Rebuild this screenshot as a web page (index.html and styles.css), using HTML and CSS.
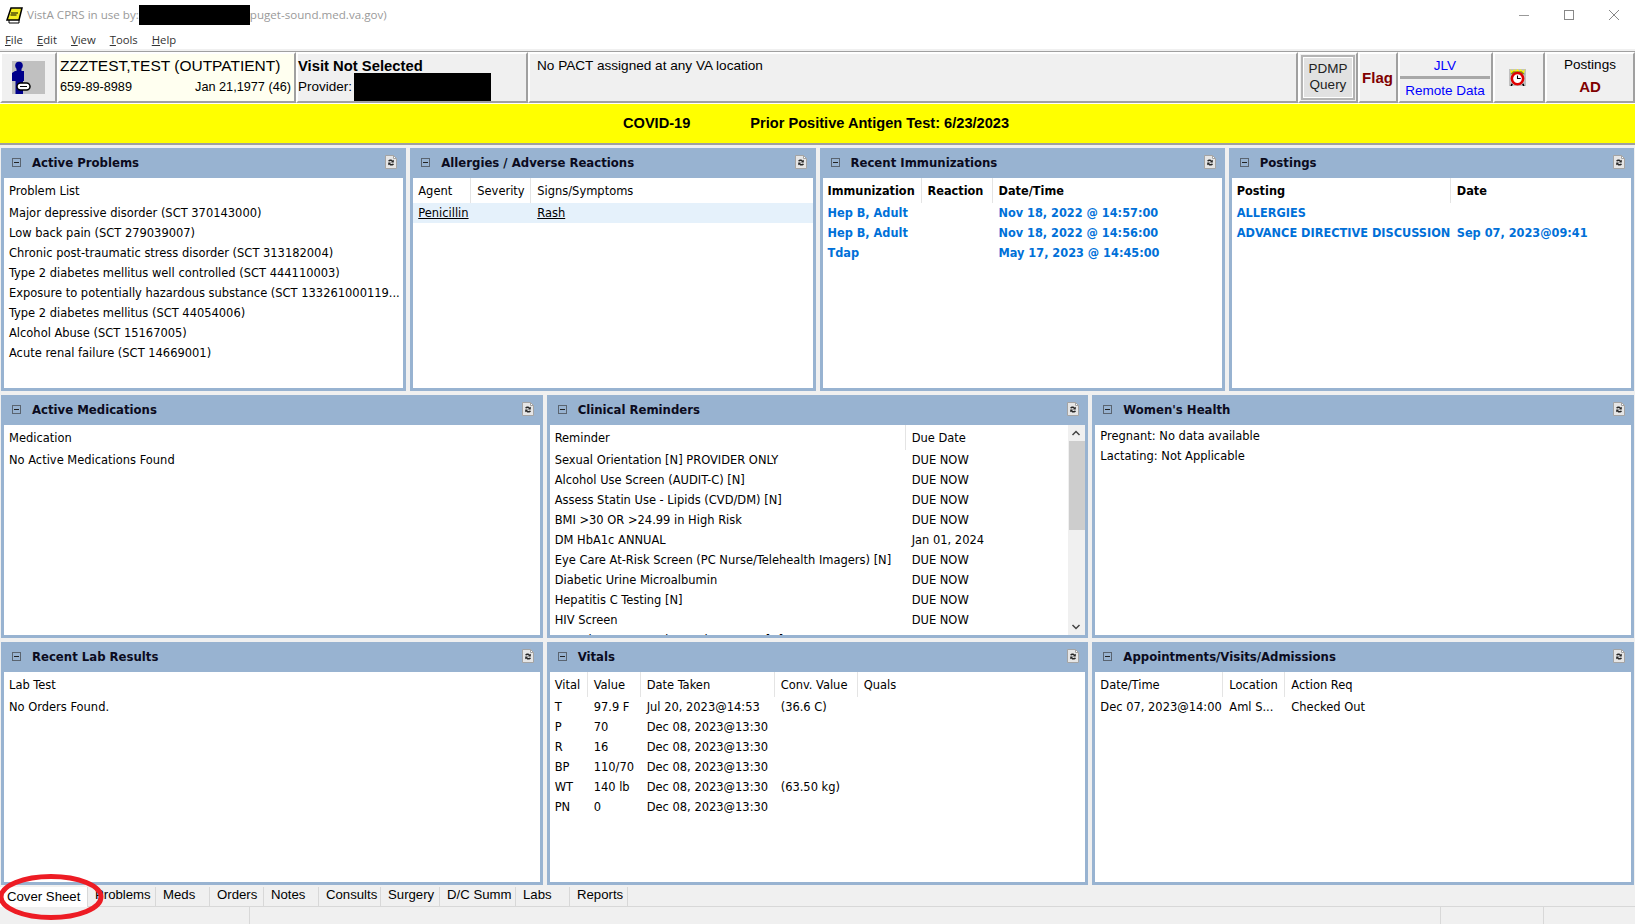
FILE: index.html
```html
<!DOCTYPE html>
<html lang="en">
<head>
<meta charset="utf-8">
<title>VistA CPRS</title>
<link rel="stylesheet" href="styles.css">
</head>
<body>
<svg class="defs" width="0" height="0" aria-hidden="true">
  <symbol id="minus" viewBox="0 0 11 11"><rect x="1.5" y="1.5" width="8" height="8" fill="none" stroke="#5a6470"/><path d="M3 5.5h5" stroke="#222"/></symbol>
  <symbol id="refresh" viewBox="1 1 12 14"><path d="M1.500 1.500h8l3 3v10h-11z" fill="#e6e6e6" stroke="#a4a4a4"/><path d="M9.500 1.500v3h3z" fill="#fff" stroke="#a4a4a4"/><path d="M4 7c.6-1.800 3.600-2.300 4.800-.4l1-.9v2.900H7l.9-.9c-.8-.8-1.900-.8-2.500-.1zM10 10c-.6 1.800-3.600 2.300-4.800.4l-1 .9V8.400H7l-.9.9c.8.8 1.900.8 2.500.1z" fill="#262626"/></symbol>
</svg>

<header class="titlebar">
  <svg class="app-icon" width="18" height="18" viewBox="0 0 18 18"><path d="M4 13h10v4H4z" fill="#fff" stroke="#000"/><path d="M6 2h11l-3 12H2z" fill="#f4ee20" stroke="#000" stroke-width="1.500"/><path d="M6 7h7M5.500 9h6" stroke="#000" stroke-width="1.200"/></svg>
  <span class="title-text">VistA CPRS in use by:</span><span class="redact-title"></span><span class="title-text">puget-sound.med.va.gov)</span>
  <div class="win-controls">
    <svg width="12" height="12" viewBox="0 0 12 12"><path d="M1 6.500h10" stroke="#999"/></svg>
    <svg width="12" height="12" viewBox="0 0 12 12"><rect x="1.500" y="1.500" width="9" height="9" fill="none" stroke="#888"/></svg>
    <svg width="12" height="12" viewBox="0 0 12 12"><path d="M1 1l10 10M11 1L1 11" stroke="#888"/></svg>
  </div>
</header>

<nav class="menubar">
  <span><u>F</u>ile</span><span><u>E</u>dit</span><span><u>V</u>iew</span><span><u>T</u>ools</span><span><u>H</u>elp</span>
</nav>

<section class="toolbar">
  <div class="cell cell-icon">
    <svg width="33" height="33" viewBox="0 0 33 33"><rect x="0" y="0" width="33" height="33" fill="#c0c0c0"/><path d="M3 10h9v10h-1v13H3.500V20H0V12z" fill="#00008b"/><circle cx="7" cy="4.500" r="3.800" fill="#00008b"/><path d="M4.500 7h5v4h-5z" fill="#00008b"/><rect x="5" y="22" width="13" height="7" rx="3.500" fill="#fff" stroke="#000" stroke-width="1.500"/><path d="M8 25.500h7" stroke="#000"/></svg>
  </div>
  <div class="cell cell-patient">
    <div class="patient-name">ZZZTEST,TEST (OUTPATIENT)</div>
    <div class="patient-sub"><span>659-89-8989</span><span>Jan 21,1977 (46)</span></div>
  </div>
  <div class="cell cell-visit">
    <div class="visit-title">Visit Not Selected</div>
    <div class="visit-sub"><span>Provider:</span><span class="redact-provider"></span></div>
  </div>
  <div class="cell cell-pact">No PACT assigned at any VA location</div>
  <div class="cell cell-pdmp"><div class="pdmp-btn">PDMP<br>Query</div></div>
  <div class="cell cell-flag">Flag</div>
  <div class="cell cell-jlv"><div class="jlv-btn">JLV</div><div class="jlv-btn">Remote Data</div></div>
  <div class="cell cell-clock">
    <svg width="17" height="17" viewBox="0 0 16 16"><rect width="16" height="16" fill="#c0c0c0"/><path d="M1 0l2 2 2-2 1 2 2-2 2 2 1-2 2 2 2-2-1 5H2z" fill="#ff0"/><path d="M1 5l3-3h8l3 3z" fill="#333" opacity=".6"/><circle cx="8" cy="9" r="5.300" fill="#fff" stroke="#e00000" stroke-width="2.400"/><path d="M8 6v3h3" stroke="#000" fill="none"/><path d="M3 14l-1 2M13 14l1 2" stroke="#000" stroke-width="1.500"/></svg>
  </div>
  <div class="cell cell-postings"><div>Postings</div><div class="ad">AD</div></div>
</section>

<section class="banner"><span>COVID-19</span><span>Prior Positive Antigen Test: 6/23/2023</span></section>

<main class="panels">
  <div class="panel-row four">
    <article class="panel">
      <div class="panel-head"><svg class="ico-min"><use href="#minus"/></svg><h2>Active Problems</h2><svg class="ico-ref"><use href="#refresh"/></svg></div>
      <div class="panel-body">
        <div class="hrow"><span>Problem List</span></div>
        <div class="row"><span>Major depressive disorder (SCT 370143000)</span></div>
        <div class="row"><span>Low back pain (SCT 279039007)</span></div>
        <div class="row"><span>Chronic post-traumatic stress disorder (SCT 313182004)</span></div>
        <div class="row"><span>Type 2 diabetes mellitus well controlled (SCT 444110003)</span></div>
        <div class="row"><span>Exposure to potentially hazardous substance (SCT 133261000119...</span></div>
        <div class="row"><span>Type 2 diabetes mellitus (SCT 44054006)</span></div>
        <div class="row"><span>Alcohol Abuse (SCT 15167005)</span></div>
        <div class="row"><span>Acute renal failure (SCT 14669001)</span></div>
      </div>
    </article>
    <article class="panel">
      <div class="panel-head"><svg class="ico-min"><use href="#minus"/></svg><h2>Allergies / Adverse Reactions</h2><svg class="ico-ref"><use href="#refresh"/></svg></div>
      <div class="panel-body allergies">
        <div class="hrow"><span>Agent</span><span>Severity</span><span>Signs/Symptoms</span></div>
        <div class="row selected"><span>Penicillin</span><span></span><span>Rash</span></div>
      </div>
    </article>
    <article class="panel">
      <div class="panel-head"><svg class="ico-min"><use href="#minus"/></svg><h2>Recent Immunizations</h2><svg class="ico-ref"><use href="#refresh"/></svg></div>
      <div class="panel-body immun">
        <div class="hrow strong"><span>Immunization</span><span>Reaction</span><span>Date/Time</span></div>
        <div class="row link"><span>Hep B, Adult</span><span></span><span>Nov 18, 2022 @ 14:57:00</span></div>
        <div class="row link"><span>Hep B, Adult</span><span></span><span>Nov 18, 2022 @ 14:56:00</span></div>
        <div class="row link"><span>Tdap</span><span></span><span>May 17, 2023 @ 14:45:00</span></div>
      </div>
    </article>
    <article class="panel">
      <div class="panel-head"><svg class="ico-min"><use href="#minus"/></svg><h2>Postings</h2><svg class="ico-ref"><use href="#refresh"/></svg></div>
      <div class="panel-body posts">
        <div class="hrow strong"><span>Posting</span><span>Date</span></div>
        <div class="row link"><span>ALLERGIES</span><span></span></div>
        <div class="row link"><span>ADVANCE DIRECTIVE DISCUSSION</span><span>Sep 07, 2023@09:41</span></div>
      </div>
    </article>
  </div>

  <div class="panel-row three">
    <article class="panel">
      <div class="panel-head"><svg class="ico-min"><use href="#minus"/></svg><h2>Active Medications</h2><svg class="ico-ref"><use href="#refresh"/></svg></div>
      <div class="panel-body">
        <div class="hrow"><span>Medication</span></div>
        <div class="row"><span>No Active Medications Found</span></div>
      </div>
    </article>
    <article class="panel">
      <div class="panel-head"><svg class="ico-min"><use href="#minus"/></svg><h2>Clinical Reminders</h2><svg class="ico-ref"><use href="#refresh"/></svg></div>
      <div class="panel-body scrolling">
        <div class="scroll-list reminders">
          <div class="hrow"><span>Reminder</span><span>Due Date</span></div>
          <div class="row"><span>Sexual Orientation [N] PROVIDER ONLY</span><span>DUE NOW</span></div>
          <div class="row"><span>Alcohol Use Screen (AUDIT-C) [N]</span><span>DUE NOW</span></div>
          <div class="row"><span>Assess Statin Use - Lipids (CVD/DM) [N]</span><span>DUE NOW</span></div>
          <div class="row"><span>BMI &gt;30 OR &gt;24.99 in High Risk</span><span>DUE NOW</span></div>
          <div class="row"><span>DM HbA1c ANNUAL</span><span>Jan 01, 2024</span></div>
          <div class="row"><span>Eye Care At-Risk Screen (PC Nurse/Telehealth Imagers) [N]</span><span>DUE NOW</span></div>
          <div class="row"><span>Diabetic Urine Microalbumin</span><span>DUE NOW</span></div>
          <div class="row"><span>Hepatitis C Testing [N]</span><span>DUE NOW</span></div>
          <div class="row"><span>HIV Screen</span><span>DUE NOW</span></div>
          <div class="row"><span>Homelessness/Food Security Screen [N]</span><span>Oct 10, 2023</span></div>
        </div>
        <div class="scrollbar">
          <svg width="16" height="16" viewBox="0 0 16 16"><path d="M4.500 10L8 6.500l3.500 3.500" fill="none" stroke="#444" stroke-width="1.500"/></svg>
          <div class="track"><div class="thumb"></div></div>
          <svg width="16" height="16" viewBox="0 0 16 16"><path d="M4.500 6L8 9.500 11.500 6" fill="none" stroke="#444" stroke-width="1.500"/></svg>
        </div>
      </div>
    </article>
    <article class="panel">
      <div class="panel-head"><svg class="ico-min"><use href="#minus"/></svg><h2>Women's Health</h2><svg class="ico-ref"><use href="#refresh"/></svg></div>
      <div class="panel-body women">
        <div class="row"><span>Pregnant: No data available</span></div>
        <div class="row"><span>Lactating: Not Applicable</span></div>
      </div>
    </article>
  </div>

  <div class="panel-row three">
    <article class="panel">
      <div class="panel-head"><svg class="ico-min"><use href="#minus"/></svg><h2>Recent Lab Results</h2><svg class="ico-ref"><use href="#refresh"/></svg></div>
      <div class="panel-body">
        <div class="hrow"><span>Lab Test</span></div>
        <div class="row"><span>No Orders Found.</span></div>
      </div>
    </article>
    <article class="panel">
      <div class="panel-head"><svg class="ico-min"><use href="#minus"/></svg><h2>Vitals</h2><svg class="ico-ref"><use href="#refresh"/></svg></div>
      <div class="panel-body vitals">
        <div class="hrow"><span>Vital</span><span>Value</span><span>Date Taken</span><span>Conv. Value</span><span>Quals</span></div>
        <div class="row"><span>T</span><span>97.9 F</span><span>Jul 20, 2023@14:53</span><span>(36.6 C)</span><span></span></div>
        <div class="row"><span>P</span><span>70</span><span>Dec 08, 2023@13:30</span><span></span><span></span></div>
        <div class="row"><span>R</span><span>16</span><span>Dec 08, 2023@13:30</span><span></span><span></span></div>
        <div class="row"><span>BP</span><span>110/70</span><span>Dec 08, 2023@13:30</span><span></span><span></span></div>
        <div class="row"><span>WT</span><span>140 lb</span><span>Dec 08, 2023@13:30</span><span>(63.50 kg)</span><span></span></div>
        <div class="row"><span>PN</span><span>0</span><span>Dec 08, 2023@13:30</span><span></span><span></span></div>
      </div>
    </article>
    <article class="panel">
      <div class="panel-head"><svg class="ico-min"><use href="#minus"/></svg><h2>Appointments/Visits/Admissions</h2><svg class="ico-ref"><use href="#refresh"/></svg></div>
      <div class="panel-body appts">
        <div class="hrow"><span>Date/Time</span><span>Location</span><span>Action Req</span></div>
        <div class="row"><span>Dec 07, 2023@14:00</span><span>Aml S...</span><span>Checked Out</span></div>
      </div>
    </article>
  </div>
</main>

<nav class="tabs">
  <span class="tab active t-cover">Cover Sheet</span>
  <span class="tab t-problems">Problems</span>
  <span class="tab t-meds">Meds</span>
  <span class="tab t-orders">Orders</span>
  <span class="tab t-notes">Notes</span>
  <span class="tab t-consults">Consults</span>
  <span class="tab t-surgery">Surgery</span>
  <span class="tab t-dc">D/C Summ</span>
  <span class="tab t-labs">Labs</span>
  <span class="tab t-reports">Reports</span>
</nav>
<footer class="status"><span class="s1"></span><span class="s2"></span><span class="s3"></span><span class="s4"></span></footer>

<svg class="annotation" width="110" height="50" viewBox="0 0 110 50" aria-hidden="true"><ellipse cx="51" cy="24" rx="50" ry="20.500" fill="none" stroke="#ed1c24" stroke-width="5"/></svg>
</body>
</html>
```

FILE: styles.css
```css
* { box-sizing: border-box; }
html, body { margin: 0; padding: 0; }
body {
  width: 1635px;
  height: 924px;
  overflow: hidden;
  position: relative;
  background: #f0f0f0;
  color: #000;
  font-family: "DejaVu Sans", Tahoma, sans-serif;
  font-stretch: condensed;
  font-size: 12.75px;
  display: flex;
  flex-direction: column;
}
.defs { position: absolute; }

.titlebar {
  height: 30px;
  padding-bottom: 1px;
  background: #fff;
  display: flex;
  align-items: center;
  padding-left: 5px;
  font-family: "Open Sans", "Liberation Sans", sans-serif;
  font-stretch: normal;
  font-size: 11.600px;
  color: #9a9a9a;
}
.app-icon { margin-right: 4px; }
.redact-title { width: 111px; height: 20px; background: #000; }
.win-controls { margin-left: auto; display: flex; gap: 33px; padding-right: 15px; }

.menubar {
  height: 19px;
  background: #fff;
  display: flex;
  gap: 14px;
  align-items: center;
  padding-left: 5px;
  font-family: "Open Sans", "Liberation Sans", sans-serif;
  font-stretch: normal;
  font-size: 11.300px;
  color: #333;
}

.toolbar {
  margin-top: 2px;
  height: 52px;
  display: flex;
  background: #f0f0f0;
  font-family: "Liberation Sans", Arial, sans-serif;
  font-stretch: normal;
  font-size: 13.500px;
  border-top: 1px solid #a0a0a0;
}
.cell {
  border: 2px solid;
  border-color: #fff #a0a0a0 #a0a0a0 #fff;
  flex: none;
}
.cell-icon { width: 57px; display: flex; align-items: center; justify-content: center; }
.cell-patient { width: 239px; background: #fffff0; padding: 1px 2px 0 1px; }
.patient-name { font-size: 15.500px; line-height: 22px; }
.patient-sub { display: flex; justify-content: space-between; line-height: 20px; font-size: 12.700px; padding-right: 1px; }
.cell-visit { width: 232px; padding: 1px 2px 0 0; }
.visit-title { font-size: 14.800px; font-weight: bold; line-height: 22px; }
.visit-sub { display: flex; align-items: flex-start; line-height: 20px; margin-top: -3px; padding-top: 2px; }
.visit-sub span:first-child { margin-top: 1px; }
.redact-provider { width: 137px; height: 28px; background: #000; margin-left: 2px; margin-top: -3px; }
.cell-pact { width: 770px; padding: 2px 7px; line-height: 20px; font-size: 13.600px; }
.cell-pdmp { width: 60px; padding: 1px 1px; }
.pdmp-btn {
  height: 45px;
  background: #e1e1e1;
  border: 2px solid #b4b4b4;
  outline: 1px solid #fff;
  outline-offset: -3px;
  text-align: center;
  line-height: 16px;
  padding-top: 4px;
  color: #222;
}
.cell-flag {
  width: 40px;
  color: #800000;
  font-weight: bold;
  font-size: 15px;
  display: flex;
  align-items: center;
  justify-content: center;
  padding-right: 1px;
}
.cell-jlv { width: 95px; display: flex; flex-direction: column; color: #0000ff; padding: 0 1px 0 0; text-align: center; }
.jlv-btn { height: 25px; line-height: 24px; border-bottom: 3px solid #a8a8a8; }
.jlv-btn:last-child { height: 23px; line-height: 23px; border-bottom: 0; }
.cell-clock { width: 52px; display: flex; align-items: center; justify-content: center; padding-right: 3px; }
.cell-postings { flex: 1; text-align: center; line-height: 22px; }
.ad { color: #800000; font-weight: bold; font-size: 15px; }

.banner {
  height: 42px;
  background: #ff0;
  border-top: 1px solid #fff;
  border-bottom: 2px solid #a0a0a0;
  display: flex;
  align-items: center;
  padding: 0 0 2px 623px;
  gap: 60px;
  font-family: "Liberation Sans", Arial, sans-serif;
  font-stretch: normal;
  font-weight: bold;
  font-size: 14.600px;
}

.panels {
  padding: 3px 1px 2px;
  display: flex;
  flex-direction: column;
  gap: 4px;
}
.panel-row { height: 243px; display: grid; gap: 4px; }
.panel-row.four { grid-template-columns: repeat(4, 1fr); }
.panel-row.three { grid-template-columns: repeat(3, 1fr); }

.panel {
  min-width: 0;
  background: #fff;
  border: 3px solid #98b3d1;
  border-top: 0;
  display: flex;
  flex-direction: column;
  overflow: hidden;
}
.panel-head {
  height: 30px;
  flex: none;
  margin: 0 -3px;
  padding: 0 9px 2px 10px;
  background: #98b3d1;
  display: flex;
  align-items: center;
}
.panel-head h2 { margin: 0 0 0 10px; font-size: 13px; font-weight: bold; color: #0b0b20; flex: 1; }
.ico-min { width: 11px; height: 11px; }
.ico-ref { width: 12px; height: 14px; }
.panel-body { flex: 1; min-height: 0; overflow: hidden; }

.hrow, .row { display: grid; grid-template-columns: 1fr; white-space: nowrap; }
.hrow { height: 25px; line-height: 26px; }
.row { height: 20px; line-height: 20px; }
.hrow span, .row span { padding-left: 5px; overflow: hidden; }
.hrow span + span, .row span + span { padding-left: 6px; }
.allergies .hrow span, .immun .hrow span, .posts .hrow span, .reminders .hrow span, .vitals .hrow span, .appts .hrow span { border-right: 1px solid #e4e4e4; }
.hrow span:last-child { border-right: 0 !important; }
.strong { font-weight: bold; font-size: 12.600px; }
.link { color: #0070d8; font-weight: bold; font-size: 12.600px; }
.selected { background: #e5f1fb; }
.selected span { text-decoration: underline; }
.women { padding-top: 1px; }

.allergies .hrow, .allergies .row { grid-template-columns: 58px 60px 1fr; }
.immun .hrow, .immun .row { grid-template-columns: 99px 71px 1fr; }
.posts .hrow, .posts .row { grid-template-columns: 219px 1fr; }
.reminders .hrow, .reminders .row { grid-template-columns: 356px 1fr; }
.vitals .hrow, .vitals .row { grid-template-columns: 38px 53px 134px 83px 1fr; }
.appts .hrow, .appts .row { grid-template-columns: 128px 62px 1fr; }

.scrolling { display: flex; }
.scroll-list { flex: 1; min-width: 0; overflow: hidden; }
.scrollbar { width: 17px; flex: none; background: #f0f0f0; display: flex; flex-direction: column; }
.track { flex: 1; }
.thumb { height: 89px; margin-left: 1px; background: #cdcdcd; }

.tabs {
  height: 20px;
  display: flex;
  background: #f0f0f0;
  border-bottom: 1px solid #d8d8d8;
  font-family: "Liberation Sans", Arial, sans-serif;
  font-stretch: normal;
  font-size: 13.200px;
}
.tab { padding-left: 7px; line-height: 16px; border-right: 1px solid #d8d8d8; flex: none; }
.tab.active { background: #fff; height: 23px; line-height: 20px; padding-left: 7px; }
.t-cover { width: 88px; }
.t-problems { width: 68px; }
.t-meds { width: 54px; }
.t-orders { width: 54px; }
.t-notes { width: 55px; }
.t-consults { width: 62px; }
.t-surgery { width: 59px; }
.t-dc { width: 76px; }
.t-labs { width: 54px; }
.t-reports { width: 58px; }

.status { flex: 1; display: flex; background: #f0f0f0; }
.status span { border-right: 1px solid #d8d8d8; }
.s1 { width: 250px; }
.s2 { width: 1191px; }
.s3 { width: 103px; }
.s4 { flex: 1; border-right: 0 !important; }

.annotation { position: absolute; left: 0; top: 873px; }
```
